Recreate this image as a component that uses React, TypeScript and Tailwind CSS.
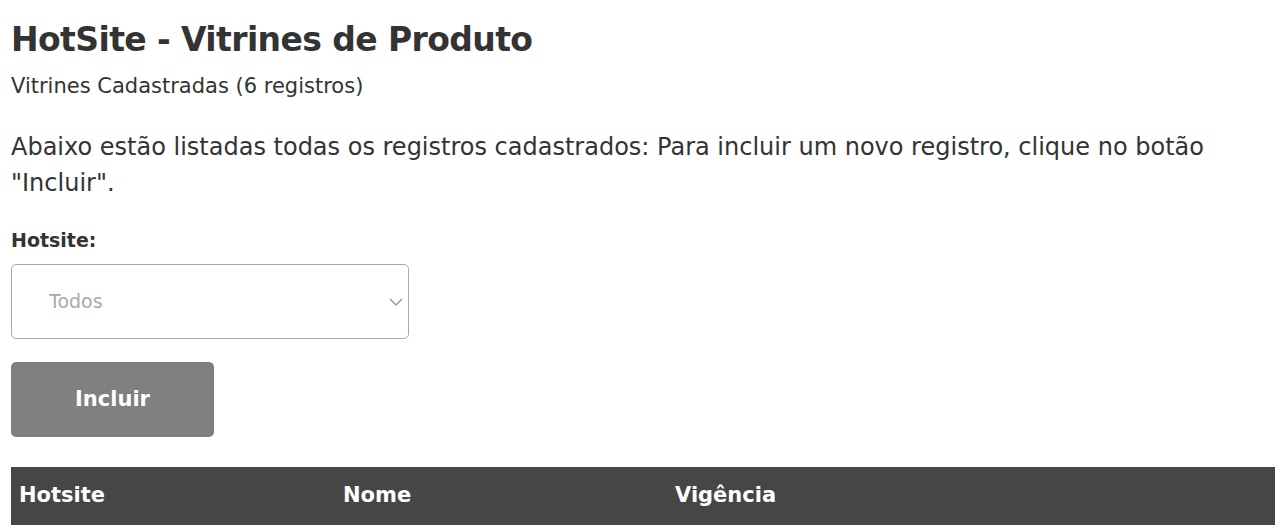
export default function App() {
  return (
    <div className="min-h-screen bg-white text-[#333] font-['DejaVu_Sans',sans-serif] px-[11px] pt-[18px]">
      <h1 className="text-[33px] font-bold leading-[44px] tracking-[-0.6px]">HotSite - Vitrines de Produto</h1>
      <p className="text-[21px] leading-[30px] mt-[9px]">Vitrines Cadastradas (6 registros)</p>

      <p className="text-[24px] leading-[36px] mt-[28px] pr-[20px]">
        Abaixo estão listadas todas os registros cadastrados: Para incluir um novo registro, clique no botão "Incluir".
      </p>

      <label className="block text-[19px] font-bold leading-[28px] mt-[25px]">Hotsite:</label>
      <div className="relative w-[398px] mt-[10px]">
        <select className="appearance-none w-full h-[75px] rounded-[5px] border border-[#aaa] bg-white pl-[37px] text-[19px] text-[#aaa] outline-none">
          <option>Todos</option>
        </select>
        <svg
          className="absolute right-[5px] top-1/2 -translate-y-1/2 text-[#999] pointer-events-none"
          width="16" height="16" viewBox="0 0 16 16"
          fill="none" stroke="currentColor" strokeWidth="1.5"
        >
          <path d="M2 5l6 6 6-6" />
        </svg>
      </div>

      <button className="mt-[23px] w-[203px] h-[75px] rounded-[5px] bg-[#808080] text-white text-[21px] font-bold">
        Incluir
      </button>

      <div className="mt-[30px] bg-[#464646] h-[58px] w-full grid grid-cols-[324px_332px_1fr] items-center px-[8px] text-white text-[21px] font-bold">
        <span>Hotsite</span>
        <span>Nome</span>
        <span>Vigência</span>
      </div>
    </div>
  );
}
